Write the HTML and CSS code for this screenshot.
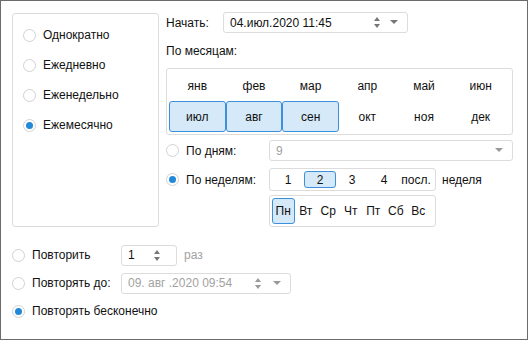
FILE: index.html
```html
<!DOCTYPE html>
<html lang="ru">
<head>
  <meta charset="UTF-8">
  <title>Повторение</title>
  <link rel="stylesheet" href="styles.css">
</head>
<body>
  <div class="window">
    <div class="top">
      <div class="group">
        <label class="radio-row"><span class="radio"></span>Однократно</label>
        <label class="radio-row"><span class="radio"></span>Ежедневно</label>
        <label class="radio-row"><span class="radio"></span>Еженедельно</label>
        <label class="radio-row"><span class="radio checked"></span>Ежемесячно</label>
      </div>

      <div class="settings">
        <div class="start-row">
          <span class="start-label">Начать:</span>
          <div class="field date-field">
            <span class="value">04.июл.2020 11:45</span>
            <svg class="spin" width="8" height="13" viewBox="0 0 8 13"><path d="M4 1 L7 5 L1 5 Z M1 8 L7 8 L4 12 Z" fill="#777"/></svg>
            <svg class="drop" width="8" height="5" viewBox="0 0 8 5"><path d="M0 0 L8 0 L4 4 Z" fill="#777"/></svg>
          </div>
        </div>

        <div class="section-title">По месяцам:</div>
        <div class="months">
          <span class="cell">янв</span>
          <span class="cell">фев</span>
          <span class="cell">мар</span>
          <span class="cell">апр</span>
          <span class="cell">май</span>
          <span class="cell">июн</span>
          <span class="cell selected">июл</span>
          <span class="cell selected">авг</span>
          <span class="cell selected">сен</span>
          <span class="cell">окт</span>
          <span class="cell">ноя</span>
          <span class="cell">дек</span>
        </div>

        <div class="option-row days-row">
          <label class="radio-row small"><span class="radio"></span>По дням:</label>
          <div class="field day-field">
            <span class="value muted">9</span>
            <svg class="drop" width="8" height="5" viewBox="0 0 8 5"><path d="M0 0 L8 0 L4 4 Z" fill="#999"/></svg>
          </div>
        </div>

        <div class="option-row weeks-row">
          <label class="radio-row small"><span class="radio checked"></span>По неделям:</label>
          <div class="weeks">
            <span class="week">1</span>
            <span class="week selected">2</span>
            <span class="week">3</span>
            <span class="week">4</span>
            <span class="week">посл.</span>
          </div>
          <span class="week-label">неделя</span>
        </div>

        <div class="weekdays">
          <span class="day selected">Пн</span>
          <span class="day">Вт</span>
          <span class="day">Ср</span>
          <span class="day">Чт</span>
          <span class="day">Пт</span>
          <span class="day">Сб</span>
          <span class="day">Вс</span>
        </div>
      </div>
    </div>

    <div class="bottom">
      <div class="bottom-row">
        <label class="radio-row small"><span class="radio"></span>Повторить</label>
        <div class="field count-field">
          <span class="value">1</span>
          <svg class="spin" width="8" height="13" viewBox="0 0 8 13"><path d="M4 1 L7 5 L1 5 Z M1 8 L7 8 L4 12 Z" fill="#777"/></svg>
        </div>
        <span class="times muted">раз</span>
      </div>
      <div class="bottom-row">
        <label class="radio-row small"><span class="radio"></span>Повторять до:</label>
        <div class="field until-field">
          <span class="value muted">09. авг .2020 09:54</span>
          <svg class="spin" width="8" height="13" viewBox="0 0 8 13"><path d="M4 1 L7 5 L1 5 Z M1 8 L7 8 L4 12 Z" fill="#999"/></svg>
          <svg class="drop" width="8" height="5" viewBox="0 0 8 5"><path d="M0 0 L8 0 L4 4 Z" fill="#999"/></svg>
        </div>
      </div>
      <div class="bottom-row">
        <label class="radio-row small wide"><span class="radio checked"></span>Повторять бесконечно</label>
      </div>
    </div>
  </div>
</body>
</html>
```

FILE: styles.css
```css
body {
  margin: 0;
  font-family: "Liberation Sans", Arial, sans-serif;
  font-size: 12px;
  color: #111;
  background: #fff;
}

.window {
  width: 528px;
  height: 340px;
  box-sizing: border-box;
  border: 1px solid #6b6b6b;
  padding: 11px 14px 0 11px;
}

.top {
  display: flex;
  gap: 7px;
}

.group {
  width: 147px;
  height: 214px;
  box-sizing: border-box;
  margin-top: 1px;
  border: 1px solid #dcdcdc;
  border-radius: 3px;
  padding: 6px 0 0 10px;
}

.radio-row {
  display: flex;
  align-items: center;
  height: 30px;
  gap: 7px;
  white-space: nowrap;
}

.radio-row.small {
  height: 21px;
}

.radio {
  width: 13px;
  height: 13px;
  box-sizing: border-box;
  border: 1px solid #d2d2d2;
  border-radius: 50%;
  background: #fff;
  display: flex;
  align-items: center;
  justify-content: center;
  flex-shrink: 0;
}

.radio.checked::after {
  content: "";
  width: 7px;
  height: 7px;
  border-radius: 50%;
  background: #2289d8;
}

.settings {
  flex: 1;
}

.start-row {
  display: flex;
  align-items: center;
}

.start-label {
  width: 57px;
}

.field {
  display: flex;
  align-items: center;
  box-sizing: border-box;
  height: 21px;
  border: 1px solid #dcdcdc;
  border-radius: 3px;
  padding: 0 6px;
}

.field .value {
  flex: 1;
}

.date-field {
  width: 185px;
}

.spin {
  margin-right: 9px;
}

.drop {
  margin-right: 3px;
}

.muted {
  color: #a2a2a2;
}

.section-title {
  margin-top: 11px;
  height: 24px;
}

.months {
  display: grid;
  grid-template-columns: repeat(6, 1fr);
  grid-template-rows: 30px 31px;
  border: 1px solid #dcdcdc;
  border-radius: 3px;
  padding: 2px 3px 2px 2px;
}

.cell {
  display: flex;
  align-items: center;
  justify-content: center;
  box-sizing: border-box;
  border: 1px solid transparent;
  border-radius: 3px;
}

.cell.selected,
.week.selected,
.day.selected {
  background: #d5e9f8;
  border-color: #3b90dc;
}

.option-row {
  display: flex;
  align-items: center;
}

.option-row .radio-row {
  width: 103px;
}

.days-row {
  margin-top: 5px;
}

.day-field {
  width: 244px;
}

.weeks-row {
  margin-top: 7px;
}

.weeks {
  display: flex;
  box-sizing: border-box;
  width: 167px;
  height: 23px;
  border: 1px solid #dcdcdc;
  border-radius: 3px;
  padding: 2px 2px;
}

.week {
  width: 32px;
  display: flex;
  align-items: center;
  justify-content: center;
  box-sizing: border-box;
  border: 1px solid transparent;
  border-radius: 3px;
}

.week-label {
  margin-left: 6px;
}

.weekdays {
  display: flex;
  box-sizing: border-box;
  width: 167px;
  height: 32px;
  margin: 4px 0 0 103px;
  border: 1px solid #dcdcdc;
  border-radius: 3px;
  padding: 2px;
}

.day {
  width: 22.5px;
  display: flex;
  align-items: center;
  justify-content: center;
  box-sizing: border-box;
  border: 1px solid transparent;
  border-radius: 3px;
}

.bottom {
  margin-top: 14px;
}

.bottom-row {
  display: flex;
  align-items: center;
  height: 28px;
}

.bottom-row .radio-row {
  width: 109px;
}

.bottom-row .radio-row.wide {
  width: auto;
}

.count-field {
  width: 56px;
}

.times {
  margin-left: 7px;
}

.until-field {
  width: 170px;
}

.until-field .spin {
  margin-right: 11px;
}
```
